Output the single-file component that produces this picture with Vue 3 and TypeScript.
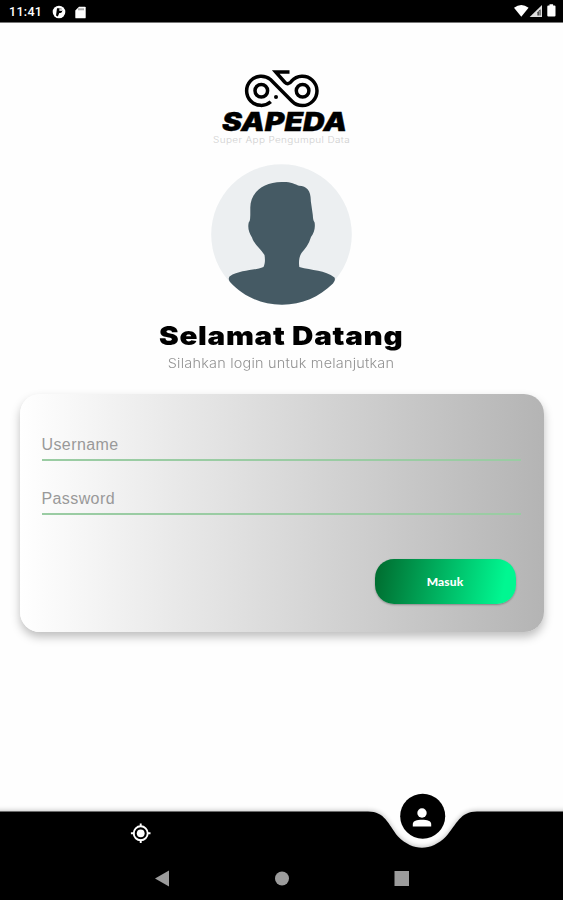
<script setup lang="ts">
import { ref } from 'vue'

interface Field {
  id: string
  label: string
  type: string
}

const fields: Field[] = [
  { id: 'username', label: 'Username', type: 'text' },
  { id: 'password', label: 'Password', type: 'password' },
]
const values = ref<Record<string, string>>({ username: '', password: '' })
</script>

<template>
  <div class="screen">
    <header class="status">
      <span class="clock">11:41</span>
      <svg class="s-app" viewBox="0 0 14 14">
        <circle cx="7" cy="7" r="6.3" fill="#fff" />
        <path d="M5 3.3h3.400a2.400 2.400 0 0 1 0 4.700H7.300L5.800 11.500L4 10.500z" fill="#000" />
        <path d="M7.300 3.300h2.700v2.700H7.300z" fill="#ccc" />
      </svg>
      <svg class="s-card" viewBox="0 0 11 13">
        <path d="M4 .7h5.8q.9 0 .9.9v9.8q0 .9-.9.9H1.2q-.9 0-.9-.9V4.4z" fill="#fff" />
        <path d="M4 2.300v2M6 2.300v2M8 2.300v2" stroke="#444" stroke-width=".9" />
      </svg>
      <svg class="s-right" viewBox="0 0 43 14">
        <path d="M0 3.7Q7.3-1.7 14.6 3.7L7.3 12.8z" fill="#fff" />
        <path d="M28 .9V13H15.7z" fill="#ddd" />
        <path d="M26.5 5.2v6.4h-3V8.2z" fill="#222" />
        <path d="M25.2 7v5" stroke="#ddd" stroke-width=".8" />
        <path d="M35.500 1.600V.3h3.600v1.300h1.400q1 0 1 1v9q0 1-1 1h-6.200q-1 0-1-1v-9q0-1 1-1z" fill="#fff" />
      </svg>
    </header>

    <main class="content">
      <svg class="logo" viewBox="200 66 163 82">
        <g fill="none" stroke="#000" stroke-width="3.5">
          <path d="M270.8 101.8A14.6 14.6 0 1 1 270.5 79.5L292 101.2A14.6 14.6 0 1 0 291.5 81.2Q288.3 85.5 284.8 82.2L275.800 72.1H289.5" />
          <circle cx="261.3" cy="90.8" r="6.3" />
          <circle cx="302.6" cy="90.8" r="6.3" />
        </g>
        <circle cx="276" cy="97" r="2" />
        <text class="brand" x="222" y="130.700" textLength="125" lengthAdjust="spacingAndGlyphs">SAPEDA</text>
        <text class="tagline" x="213" y="143.300" textLength="137" lengthAdjust="spacingAndGlyphs">Super App Pengumpul Data</text>
      </svg>

      <svg class="avatar" viewBox="0 0 141 141">
        <circle cx="70.5" cy="70.5" r="70.3" fill="#eceff1" />
        <path
          d="M70.500 18C79 17.500 84 20 88 21.800C96 22 100 27 99.800 37L101.800 51C102 54 102 56 103.600 58.500C104.500 64 103 69 100 73C98 80 94 85 90.500 89C88 93 87.600 98 88.300 103C101 106.500 114 106 123.500 113.500C124.700 116 123 118 122 119.500C108 133 91 140.700 71 140.700C50 140.700 32 132 19.500 118.500C17.500 116 17.300 114.500 18.500 112.500C29 105.500 43 107 52.500 103C54.500 99 54 94 53.500 91C49 84 43 80 41 73.500C38 69 36.500 64 37.700 58.500C39.500 57 39 54 39.300 51V44C39 29 52 18 70.500 18Z"
          fill="#455a64"
        />
      </svg>

      <h1 class="title">Selamat Datang</h1>
      <p class="subtitle">Silahkan login untuk melanjutkan</p>

      <form class="card" @submit.prevent>
        <input
          v-for="f in fields"
          :key="f.id"
          v-model="values[f.id]"
          class="field"
          :type="f.type"
          :placeholder="f.label"
          :aria-label="f.label"
        />
        <button class="submit" type="submit">Masuk</button>
      </form>
    </main>

    <footer class="bottom">
      <svg class="curve" viewBox="0 0 563 112" aria-hidden="true">
        <defs>
          <filter id="soft" x="-5%" y="-20%" width="110%" height="140%">
            <feGaussianBlur stdDeviation="2.5" />
          </filter>
        </defs>
        <path d="M-10 22.500H368C385 22.500 388 35 398 47.500C413 62.500 431 62.500 446 47.500C457 35 460 22.500 477 22.500H573V112H-10z" fill="#000" opacity=".24" filter="url(#soft)" />
        <path d="M0 23.500H368C385 23.500 388 36 398 48.500C413 63.500 431 63.500 446 48.500C457 36 460 23.500 477 23.500H563V112H0z" fill="#000" />
        <circle cx="422.700" cy="28.200" r="22.500" fill="#000" />
        <g fill="#fff">
          <circle cx="422" cy="25" r="4.700" />
          <path d="M412.800 38.500V36C412.800 33 417 31.700 422 31.700S431.200 33 431.200 36V38.500z" />
          <circle cx="140.700" cy="45.300" r="3.900" />
        </g>
        <path d="M140.700 35.500V39M140.700 51.600V55.100M130.900 45.300H134.400M147 45.300H150.500" stroke="#fff" stroke-width="1.900" />
        <circle cx="140.700" cy="45.300" r="7" fill="none" stroke="#fff" stroke-width="1.900" />
        <g fill="#9c9c9c">
          <path d="M155 90.500L169 82.500V98.500z" />
          <circle cx="282" cy="90.500" r="7" />
          <path d="M394.500 83H409V98H394.500z" />
        </g>
      </svg>
    </footer>
  </div>
</template>

<style>
body {
  margin: 0;
}
</style>

<style scoped>
.screen {
  width: 563px;
  height: 900px;
  background: #fefefe;
  display: flex;
  flex-direction: column;
  overflow: hidden;
}
.status {
  box-sizing: border-box;
  height: 23px;
  flex: none;
  padding: 0 6px 0 9px;
  background: #000;
  border-bottom: 1px solid #777;
  display: flex;
  align-items: center;
}
.clock {
  width: 43px;
  color: #fff;
  font: 500 12.5px/24px Roboto, sans-serif;
  letter-spacing: 0.3px;
  padding-top: 2px;
}
.s-app {
  width: 14px;
  height: 14px;
  margin-top: 2px;
}
.s-card {
  width: 11px;
  height: 13px;
  margin: 2px 0 0 9px;
}
.s-right {
  width: 43px;
  height: 14px;
  margin-left: auto;
}
.content {
  flex: 1;
  display: flex;
  flex-direction: column;
  align-items: center;
}
.logo {
  width: 163px;
  height: 82px;
  margin-top: 43px;
}
.brand {
  font: italic 900 25.500px Inter, sans-serif;
  stroke: #000;
  stroke-width: 0.4px;
}
.tagline {
  font: 300 8.500px Inter, sans-serif;
  fill: #cfcfcf;
  letter-spacing: 0.3px;
}
.avatar {
  width: 141px;
  height: 141px;
  margin-top: 16px;
}
.title {
  margin: 14px 0 0;
  font: 900 26px/34px Inter, sans-serif;
  letter-spacing: 0.6px;
  color: #000;
  white-space: nowrap;
  transform: scaleX(1.14);
}
.subtitle {
  margin: 0;
  font: 300 13px/20px Inter, sans-serif;
  letter-spacing: 0.2px;
  color: #929292;
  white-space: nowrap;
  transform: scaleX(1.11);
}
.card {
  box-sizing: border-box;
  width: 524px;
  height: 238px;
  margin-top: 21px;
  padding: 35px 22px 0;
  border-radius: 20px;
  background: linear-gradient(90deg, #fff 0%, #b4b4b4 100%);
  box-shadow: 0 5px 10px rgba(0, 0, 0, 0.25);
  display: flex;
  flex-direction: column;
}
.field {
  box-sizing: border-box;
  width: 479px;
  height: 32px;
  margin: 0 0 22px;
  padding: 2px 0 0;
  border: 0;
  border-bottom: 2px solid #9acca3;
  border-radius: 0;
  background: transparent;
  font: 400 16px/28px "Liberation Sans", sans-serif;
  letter-spacing: 0.4px;
  color: #333;
  outline: 0;
}
.field::placeholder {
  color: #999;
  opacity: 1;
}
.submit {
  width: 141px;
  height: 45px;
  margin: 22px 6px 0 0;
  padding: 0;
  align-self: flex-end;
  border: 0;
  border-radius: 19px;
  background: linear-gradient(100deg, #006f31 3%, #00f791 90%);
  box-shadow: 0 1px 2px rgba(0, 0, 0, 0.3);
  color: #fff;
  font: 900 12px/43px Lato, sans-serif;
  letter-spacing: 0.1px;
}
.bottom {
  flex: none;
  height: 112px;
}
.curve {
  display: block;
  width: 563px;
  height: 112px;
  overflow: visible;
}
</style>
